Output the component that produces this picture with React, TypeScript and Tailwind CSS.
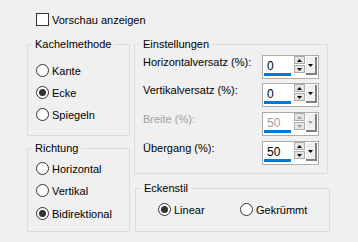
import React from 'react'

function Radio({ checked }: { checked?: boolean }) {
  return (
    <span className="w-[13px] h-[13px] shrink-0 rounded-full border border-[#333333] bg-white flex items-center justify-center">
      {checked && <span className="w-[7px] h-[7px] rounded-full bg-[#333333]" />}
    </span>
  )
}

function RadioRow({ label, checked, className = '' }: { label: string; checked?: boolean; className?: string }) {
  return (
    <div className={'flex items-center h-[13px] gap-[3px] ' + className}>
      <Radio checked={checked} />
      <span>{label}</span>
    </div>
  )
}

function Arrow({ up, color }: { up?: boolean; color: string }) {
  return (
    <svg width="5" height="3" viewBox="0 0 5 3">
      <path d={up ? 'M2.5 0 L5 3 L0 3 Z' : 'M0 0 L5 0 L2.5 3 Z'} fill={color} />
    </svg>
  )
}

function SpinBox({ value, disabled }: { value: string; disabled?: boolean }) {
  const arrow = disabled ? '#a0a0a0' : '#000000'
  return (
    <div className="w-[57px] h-[24px] shrink-0 border border-[#acacac] bg-white flex">
      <div className="w-[30px] flex flex-col">
        <div className={'pl-[4px] pt-[2px] h-[17px] text-[12px] ' + (disabled ? 'text-[#a0a0a0]' : 'text-black')}>{value}</div>
        <div className="h-[3px] w-[27px] ml-[1px] bg-[#0078d7]" />
      </div>
      <div className="ml-[1px] w-[11px] flex flex-col gap-[1px]">
        <div className="h-[8px] border border-[#adadad] bg-[#e5e5e5] flex items-center justify-center">
          <Arrow up color={arrow} />
        </div>
        <div className="h-[8px] border border-[#adadad] bg-[#e5e5e5] flex items-center justify-center">
          <Arrow color={arrow} />
        </div>
      </div>
      <div className="ml-[1px] mt-[1px] w-[11px] h-[18px] bg-[#f0f0f0] border-r-2 border-b-2 border-r-[#808080] border-b-[#808080] flex items-center justify-center">
        <Arrow color={arrow} />
      </div>
    </div>
  )
}

function Legend({ children, className = '' }: { children: React.ReactNode; className?: string }) {
  return <legend className={'px-[3px] leading-[16px] ' + className}>{children}</legend>
}

export default function App() {
  return (
    <div className="w-[358px] h-[242px] bg-[#f0f0f0] text-black text-[11px] leading-[16px] font-['Liberation_Sans',Arial,sans-serif]">
      <div className="pt-[13px] pl-[36px]">
        <div className="flex items-center h-[13px] gap-[3px]">
          <span className="w-[13px] h-[13px] border border-[#333333] bg-white" />
          <span>Vorschau anzeigen</span>
        </div>
      </div>

      <div className="flex pl-[27px] mt-[10px]">
        {/* left column */}
        <div className="w-[103px] flex flex-col">
          <fieldset className="border border-[#dcdcdc]">
            <Legend className="ml-[4px]">Kachelmethode</Legend>
            <div className="pt-[12px] pb-[14px] pl-[8px]">
              <RadioRow label="Kante" />
              <RadioRow label="Ecke" checked className="mt-[9px]" />
              <RadioRow label="Spiegeln" className="mt-[9px]" />
            </div>
          </fieldset>
          <fieldset className="mt-[4px] border border-[#dcdcdc]">
            <Legend className="ml-[4px]">Richtung</Legend>
            <div className="pt-[6px] pb-[11px] pl-[8px]">
              <RadioRow label="Horizontal" />
              <RadioRow label="Vertikal" className="mt-[9px]" />
              <RadioRow label="Bidirektional" checked className="mt-[10px]" />
            </div>
          </fieldset>
        </div>

        {/* right column */}
        <div className="ml-[4px] flex flex-col">
          <fieldset className="w-[194px] border border-[#dcdcdc]">
            <Legend className="ml-[5px]">Einstellungen</Legend>
            <div className="pt-[3px] pb-[8px] pl-[8px] pr-[8px]">
              <div className="flex items-start justify-between">
                <span className="-mt-px">Horizontalversatz (%):</span>
                <SpinBox value="0" />
              </div>
              <div className="flex items-start justify-between mt-[4px]">
                <span className="-mt-px">Vertikalversatz (%):</span>
                <SpinBox value="0" />
              </div>
              <div className="flex items-start justify-between mt-[5px]">
                <span className="-mt-px text-[#a0a0a0]">Breite (%):</span>
                <SpinBox value="50" disabled />
              </div>
              <div className="flex items-start justify-between mt-[5px]">
                <span className="-mt-px">Übergang (%):</span>
                <SpinBox value="50" />
              </div>
            </div>
          </fieldset>
          <fieldset className="ml-[1px] mt-[6px] w-[195px] border border-[#dcdcdc]">
            <Legend className="ml-[5px]">Eckenstil</Legend>
            <div className="pt-[7px] pb-[15px] pl-[22px] flex">
              <RadioRow label="Linear" checked className="w-[82px]" />
              <RadioRow label="Gekrümmt" />
            </div>
          </fieldset>
        </div>
      </div>
    </div>
  )
}
